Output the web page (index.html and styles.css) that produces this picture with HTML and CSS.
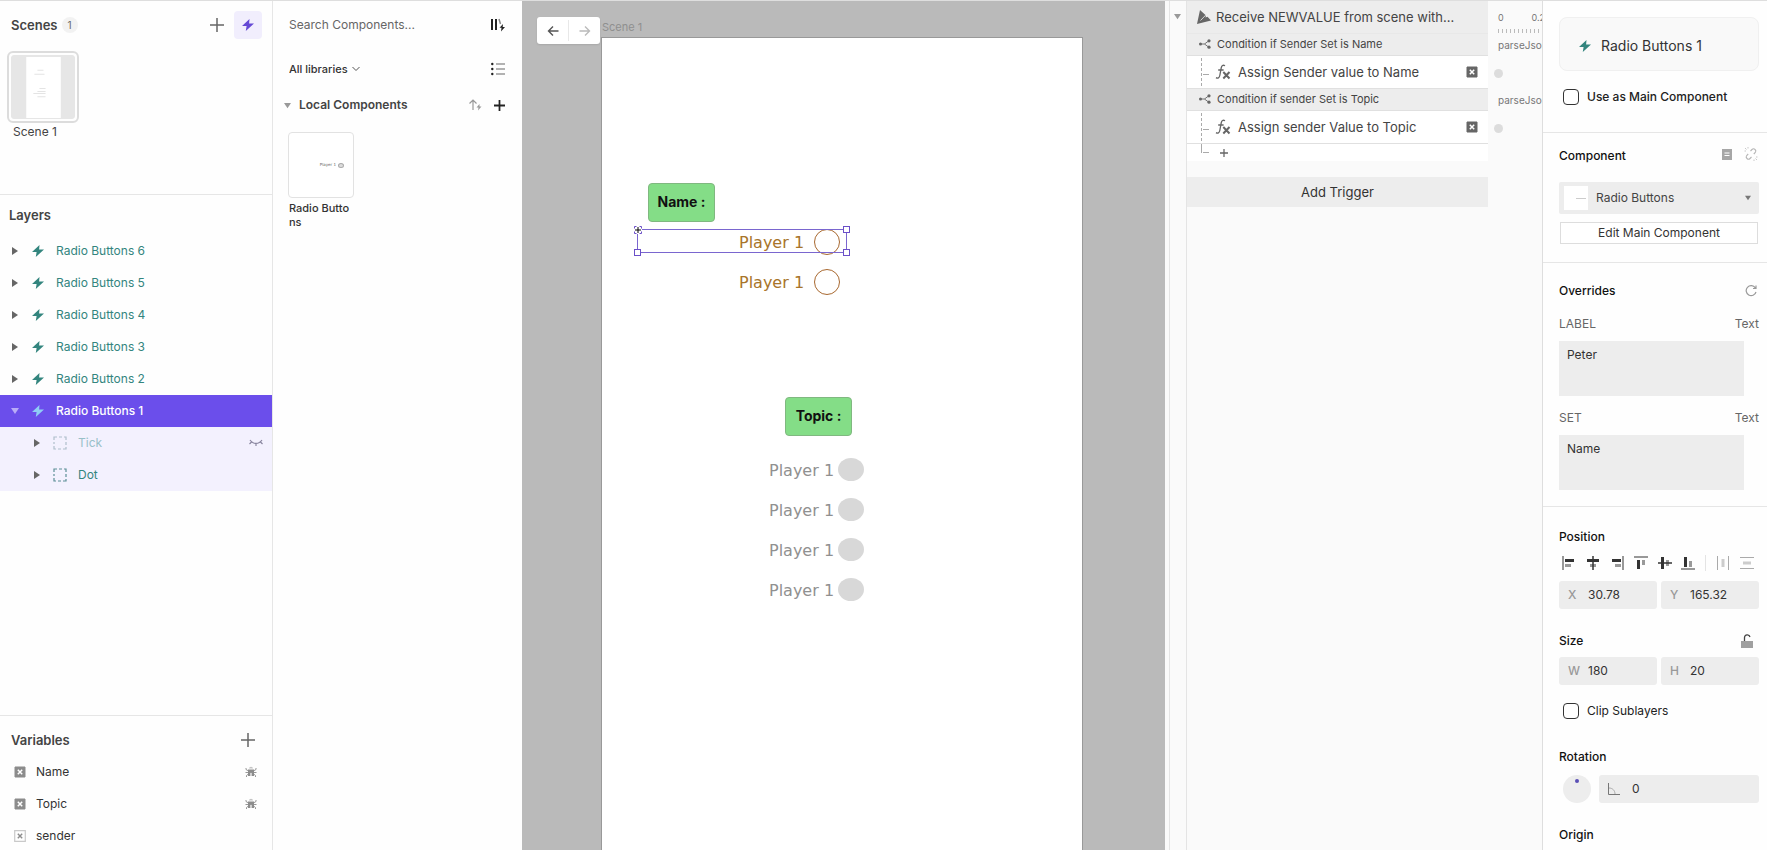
FILE: index.html
```html
<!DOCTYPE html>
<html lang="en">
<head>
    <meta charset="UTF-8">
    <meta name="viewport" content="width=device-width, initial-scale=1.0">
    <title>Scene 1</title>
    <link rel="stylesheet" href="styles.css">
</head>
<body>
    <!-- Shared icons -->
    <svg class="sprite" width="0" height="0" aria-hidden="true">
        <symbol id="bolt" viewBox="0 0 12 12"><path d="M7.5 0 0 7h4.6L3.8 12 12 4.6H7.1z" fill="currentColor"/></symbol>
        <symbol id="plus" viewBox="0 0 14 14"><path d="M7 0v14M0 7h14" fill="none" stroke="currentColor" stroke-width="1.5"/></symbol>
        <symbol id="plus-bold" viewBox="0 0 10 10"><path d="M5 0v10M0 5h10" fill="none" stroke="currentColor" stroke-width="1.6"/></symbol>
        <symbol id="right" viewBox="0 0 8 8"><path d="M1 0l6 4-6 4z" fill="currentColor"/></symbol>
        <symbol id="down" viewBox="0 0 8 8"><path d="M0 1h8L4 7z" fill="currentColor"/></symbol>
        <symbol id="group" viewBox="0 0 14 14"><path d="M1 4V1h3M6 1h3M11 1h2v3M13 6v3M13 11v2h-3M8 13H5M3 13H1v-3M1 8V6" fill="none" stroke="currentColor" stroke-width="1.2"/></symbol>
        <symbol id="variable" viewBox="0 0 12 12"><path d="M1 1h10v10H1z" fill="currentColor" stroke="currentColor"/><path d="M3.8 3.8l4.4 4.4M8.2 3.8L3.8 8.2" stroke="#fff" stroke-width="1.5"/></symbol>
        <symbol id="variable-open" viewBox="0 0 12 12"><path d="M.7.7h10.6v10.6H.7z" fill="none" stroke="#c9c9c9" stroke-width="1.2"/><path d="M3.8 3.8l4.4 4.4M8.2 3.8L3.8 8.2" stroke="#8c8c8c" stroke-width="1.4"/></symbol>
        <symbol id="bug" viewBox="0 0 12 12"><path d="M4 2.5a2 1.8 0 0 1 4 0z" fill="#c4c4c4"/><path d="M3 3.5h6V10H6.6V6H5.4v4H3z" fill="currentColor"/><path d="M1 2v1.5l2 1.2M11 2v1.5L9 4.7M.5 6.5h11M3 8.3L1.5 9.5V11M9 8.3l1.5 1.2V11" fill="none" stroke="currentColor" stroke-width=".9"/></symbol>
        <symbol id="branch" viewBox="0 0 12 10"><path d="M1.5 5h4L9.5 2M5.5 5l4 3" fill="none" stroke="currentColor" stroke-width=".9"/><circle cx="1.5" cy="5" r="1.5" fill="currentColor"/><circle cx="10" cy="1.8" r="1.6" fill="currentColor"/><circle cx="10" cy="8.2" r="1.6" fill="currentColor"/></symbol>
        <symbol id="fx" viewBox="0 0 16 16"><path d="M10 1.8C8 .5 6.7 1.5 6.2 4L4.8 11.5C4.3 14 2.8 14.7 1 13.6M3.2 6h5.4" fill="none" stroke="currentColor" stroke-width="1.3"/><path d="M8.3 8l6.2 6.5M14.5 8l-6.2 6.5" stroke="currentColor" stroke-width="2"/></symbol>
    </svg>

    <div class="app">
        <aside class="sidebar">
            <section class="scenes">
                <header class="scenes-header">
                    <h2>Scenes</h2>
                    <span class="badge">1</span>
                    <button class="icon-btn push" aria-label="Add scene"><svg class="icon-plus"><use href="#plus"/></svg></button>
                    <button class="icon-btn active" aria-label="Components"><svg class="icon-bolt"><use href="#bolt"/></svg></button>
                </header>
                <button class="scene">
                    <svg class="scene-thumb" viewBox="0 0 63 63">
                        <rect width="63" height="63" rx="3" fill="#e6e6e6"/>
                        <rect x="15" y="2" width="34" height="60" fill="#fff"/>
                        <path d="M26 15h6M23 19h10M28 33h6M26 36h8M22 38h12M26 41h8" stroke="#e4e4e4" fill="none"/>
                    </svg>
                    <span class="scene-name">Scene 1</span>
                </button>
            </section>

            <section class="layers">
                <h2>Layers</h2>
                <ul>
                    <li class="layer"><svg class="icon-arrow"><use href="#right"/></svg><svg class="icon-bolt"><use href="#bolt"/></svg><span>Radio Buttons 6</span></li>
                    <li class="layer"><svg class="icon-arrow"><use href="#right"/></svg><svg class="icon-bolt"><use href="#bolt"/></svg><span>Radio Buttons 5</span></li>
                    <li class="layer"><svg class="icon-arrow"><use href="#right"/></svg><svg class="icon-bolt"><use href="#bolt"/></svg><span>Radio Buttons 4</span></li>
                    <li class="layer"><svg class="icon-arrow"><use href="#right"/></svg><svg class="icon-bolt"><use href="#bolt"/></svg><span>Radio Buttons 3</span></li>
                    <li class="layer"><svg class="icon-arrow"><use href="#right"/></svg><svg class="icon-bolt"><use href="#bolt"/></svg><span>Radio Buttons 2</span></li>
                    <li class="layer selected"><svg class="icon-arrow"><use href="#down"/></svg><svg class="icon-bolt"><use href="#bolt"/></svg><span>Radio Buttons 1</span></li>
                    <li class="layer child hidden-layer">
                        <svg class="icon-arrow"><use href="#right"/></svg><svg class="icon-group"><use href="#group"/></svg><span>Tick</span>
                        <svg class="icon-eye push" viewBox="0 0 14 8"><path d="M1 1c3 4.5 9 4.5 12 0M2.5 3L.5 5M7 4.5V7M11.5 3l2 2" fill="none" stroke="currentColor" stroke-width="1.2"/></svg>
                    </li>
                    <li class="layer child"><svg class="icon-arrow"><use href="#right"/></svg><svg class="icon-group"><use href="#group"/></svg><span>Dot</span></li>
                </ul>
            </section>

            <section class="variables">
                <header class="variables-header">
                    <h2>Variables</h2>
                    <button class="icon-btn push" aria-label="Add variable"><svg class="icon-plus"><use href="#plus"/></svg></button>
                </header>
                <ul>
                    <li class="variable"><svg class="icon-var"><use href="#variable"/></svg><span>Name</span><svg class="icon-bug push"><use href="#bug"/></svg></li>
                    <li class="variable"><svg class="icon-var"><use href="#variable"/></svg><span>Topic</span><svg class="icon-bug push"><use href="#bug"/></svg></li>
                    <li class="variable"><svg class="icon-var"><use href="#variable-open"/></svg><span>sender</span></li>
                </ul>
            </section>
        </aside>

        <aside class="library">
            <div class="library-row search-row">
                <input class="search" type="text" aria-label="Search components" placeholder="Search Components...">
                <button class="icon-btn dark" aria-label="Manage libraries"><svg width="14" height="14" viewBox="0 0 14 14"><path d="M1 1v11M5 1v11" stroke="currentColor" stroke-width="2"/><path d="M8 1l1.5 5" stroke="#8a8a8a" stroke-width="1.5"/><path d="M12 6L8.5 9.800h2L10 13.500 14 9h-2.300z" fill="currentColor"/></svg></button>
            </div>
            <div class="library-row filter-row">
                <select class="filter" aria-label="Library"><option>All libraries</option></select>
                <svg class="chevron" viewBox="0 0 8 6"><path d="M.5 1L4 4.500 7.500 1" fill="none" stroke="currentColor"/></svg>
                <button class="icon-btn dark push" aria-label="List view"><svg width="14" height="14" viewBox="0 0 14 14"><path d="M5 2h9M5 7h9M5 12h9" stroke="#999" stroke-width="1.3"/><g fill="currentColor"><circle cx="1.3" cy="2" r="1.2"/><circle cx="1.3" cy="7" r="1.2"/><circle cx="1.3" cy="12" r="1.2"/></g></svg></button>
            </div>
            <div class="library-row local-row">
                <svg class="icon-fold"><use href="#down"/></svg>
                <h2>Local Components</h2>
                <button class="icon-btn faint push" aria-label="Publish"><svg width="13" height="12" viewBox="0 0 13 12"><path d="M4 11V1M.5 4.500L4 1l3.500 3.500" fill="none" stroke="currentColor" stroke-width="1.2"/><path d="M10.500 5L7.500 8.500h2L9 11.500l3.500-4h-2z" fill="currentColor"/></svg></button>
                <button class="icon-btn dark" aria-label="Add component"><svg width="11" height="11"><use href="#plus-bold"/></svg></button>
            </div>
            <figure class="component">
                <div class="component-thumb"><span>Player 1</span><i></i></div>
                <figcaption>Radio Buttons</figcaption>
            </figure>
        </aside>

        <main class="stage">
            <span class="scene-label">Scene 1</span>
            <div class="history">
                <button aria-label="Back"><svg viewBox="0 0 12 12"><path d="M6 1.5L1.5 6 6 10.500M1.500 6h10" fill="none" stroke="currentColor" stroke-width="1.4"/></svg></button>
                <button aria-label="Forward" disabled><svg viewBox="0 0 12 12"><path d="M6 1.5L10.500 6 6 10.500M10.500 6H.5" fill="none" stroke="currentColor" stroke-width="1.4"/></svg></button>
            </div>
            <div class="artboard">
                <div class="tag tag-name">Name :</div>
                <label class="player name-1">Player 1 <input type="radio" name="name"></label>
                <label class="player name-2">Player 1 <input type="radio" name="name"></label>
                <div class="selection">
                    <svg class="origin" viewBox="0 0 8 8"><path d="M4 1v6M1 4h6" stroke="#000"/><path d="M.5 2.500v-2h2M5.500.5h2v2M7.500 5.500v2h-2M2.500 7.500h-2v-2" fill="none" stroke="#6b4fc8"/></svg>
                    <i class="handle top-right"></i>
                    <i class="handle bottom-right"></i>
                    <i class="handle bottom-left"></i>
                </div>
                <div class="tag tag-topic">Topic :</div>
                <div class="topics">
                    <label class="player muted">Player 1 <input type="radio" name="topic"></label>
                    <label class="player muted">Player 1 <input type="radio" name="topic"></label>
                    <label class="player muted">Player 1 <input type="radio" name="topic"></label>
                    <label class="player muted">Player 1 <input type="radio" name="topic"></label>
                </div>
            </div>
        </main>

        <section class="interactions">
            <div class="gutter"><svg class="icon-fold"><use href="#down"/></svg></div>
            <div class="triggers">
                <div class="trigger">
                    <svg width="14" height="14" viewBox="0 0 14 14"><path d="M3 0L0 14l14-3.500-3.500-3.700-2 .8L9 5.500z" fill="currentColor"/><path d="M8.800 5L3.500 10.500" stroke="#ededed" stroke-width=".8"/></svg>
                    <span>Receive NEWVALUE from scene with...</span>
                </div>
                <div class="condition"><svg width="12" height="10"><use href="#branch"/></svg><span>Condition if Sender Set is Name</span></div>
                <div class="response"><svg class="icon-fx"><use href="#fx"/></svg><span>Assign Sender value to Name</span><svg class="icon-target push"><use href="#variable"/></svg></div>
                <div class="condition"><svg width="12" height="10"><use href="#branch"/></svg><span>Condition if sender Set is Topic</span></div>
                <div class="response"><svg class="icon-fx"><use href="#fx"/></svg><span>Assign sender Value to Topic</span><svg class="icon-target push"><use href="#variable"/></svg></div>
                <div class="add-response"><button class="icon-btn" aria-label="Add response"><svg width="8" height="8"><use href="#plus-bold"/></svg></button></div>
                <button class="add-trigger">Add Trigger</button>
            </div>
            <div class="timeline">
                <div class="ruler"><span>0</span><span>0.2</span></div>
                <div class="ticks"></div>
                <div class="track-label">parseJson</div>
                <div class="track"><i></i></div>
                <div class="track-label">parseJson</div>
                <div class="track"><i></i></div>
            </div>
        </section>

        <aside class="inspector">
            <section class="panel panel-layer">
                <div class="card"><svg class="icon-bolt"><use href="#bolt"/></svg><span>Radio Buttons 1</span></div>
                <label class="check strong"><input type="checkbox"> Use as Main Component</label>
            </section>

            <section class="panel panel-component">
                <header class="panel-header component-header">
                    <h3>Component</h3>
                    <svg class="push" width="10" height="11" viewBox="0 0 10 11"><path d="M0 0h10v11H0z" fill="#a6a6a6"/><path d="M2.500 4h5M2.500 6.500h5" stroke="#fff"/></svg>
                    <svg class="unlink" width="14" height="14" viewBox="0 0 14 14"><path d="M6.500 4L8 2.500c2-2 5 1 3.300 3L9.800 7M7.500 10L6 11.500c-2 2-5-1-3.300-3L4.200 7" fill="none" stroke="#b5b5b5" stroke-width="1.1"/><path d="M.5 4h1.500M1 1l1.500 1.500M4 0v1.500M13.500 10H12M13 13l-1.500-1.500M10 14v-1.500" fill="none" stroke="#c8c8c8"/></svg>
                </header>
                <div class="component-select">
                    <select aria-label="Component"><option>Radio Buttons</option></select>
                    <span class="mini-thumb"><i></i></span>
                    <svg class="caret"><use href="#down"/></svg>
                </div>
                <button class="edit-btn">Edit Main Component</button>
            </section>

            <section class="panel panel-overrides">
                <header class="panel-header">
                    <h3>Overrides</h3>
                    <svg class="push reset" width="12" height="12" viewBox="0 0 12 12"><path d="M10.300 2.800A5 5 0 1 0 11 7M11 .5v3H8" fill="none" stroke="#999" stroke-width="1.2"/></svg>
                </header>
                <div class="field-label"><label for="override-label">LABEL</label><span>Text</span></div>
                <textarea id="override-label">Peter</textarea>
                <div class="field-label next"><label for="override-set">SET</label><span>Text</span></div>
                <textarea id="override-set">Name</textarea>
            </section>

            <section class="panel panel-layout">
                <h3>Position</h3>
                <div class="align">
                    <button aria-label="Align left"><svg viewBox="0 0 14 14"><path d="M1 0v14" stroke="#333"/><path d="M3 4.500h9" stroke="#333" stroke-width="3"/><path d="M3 9.500h6" stroke="#999" stroke-width="3"/></svg></button>
                    <button aria-label="Align center"><svg viewBox="0 0 14 14"><path d="M1 4.500h12" stroke="#333" stroke-width="3"/><path d="M4 9.500h6" stroke="#999" stroke-width="3"/><path d="M7 0v14" stroke="#333" stroke-width="1.5"/></svg></button>
                    <button aria-label="Align right"><svg viewBox="0 0 14 14"><path d="M13 0v14" stroke="#333"/><path d="M2 4.500h9" stroke="#333" stroke-width="3"/><path d="M5 9.500h6" stroke="#999" stroke-width="3"/></svg></button>
                    <button aria-label="Align top"><svg viewBox="0 0 14 14"><path d="M0 1h14" stroke="#333"/><path d="M4.500 4v9" stroke="#333" stroke-width="3"/><path d="M9.500 4v5" stroke="#999" stroke-width="3"/></svg></button>
                    <button aria-label="Align middle"><svg viewBox="0 0 14 14"><path d="M4.500 1v12" stroke="#333" stroke-width="3"/><path d="M9.500 4v6" stroke="#999" stroke-width="3"/><path d="M0 7h14" stroke="#333" stroke-width="1.5"/></svg></button>
                    <button aria-label="Align bottom"><svg viewBox="0 0 14 14"><path d="M0 13h14" stroke="#333"/><path d="M4.500 1v10" stroke="#333" stroke-width="3"/><path d="M9.500 5v6" stroke="#999" stroke-width="3"/></svg></button>
                    <i class="align-divider"></i>
                    <button aria-label="Distribute horizontally"><svg viewBox="0 0 14 14"><path d="M1.500 0v14M12.500 0v14" stroke="#aaa"/><path d="M7 3v8" stroke="#ccc" stroke-width="3"/></svg></button>
                    <button aria-label="Distribute vertically"><svg viewBox="0 0 14 14"><path d="M0 1.500h14M0 12.500h14" stroke="#aaa"/><path d="M3 7h8" stroke="#ccc" stroke-width="3"/></svg></button>
                </div>
                <div class="pair">
                    <label class="number">X <input type="text" value="30.78"></label>
                    <label class="number">Y <input type="text" value="165.32"></label>
                </div>

                <header class="panel-header size-header">
                    <h3>Size</h3>
                    <svg class="push lock" width="12" height="14" viewBox="0 0 12 14"><path d="M3.500 7V3.500a2.800 2.800 0 0 1 5.500-.5" fill="none" stroke="#444" stroke-width="1.3"/><path d="M0 7h12v7H0z" fill="#a0a0a0"/></svg>
                </header>
                <div class="pair">
                    <label class="number">W <input type="text" value="180"></label>
                    <label class="number">H <input type="text" value="20"></label>
                </div>
                <label class="check clip"><input type="checkbox"> Clip Sublayers</label>

                <h3 class="rotation-title">Rotation</h3>
                <div class="rotation">
                    <span class="dial"><i></i></span>
                    <label class="number angle">
                        <svg width="12" height="12" viewBox="0 0 12 12"><path d="M.5 0v11.500H12" fill="none" stroke="#777"/><path d="M1 5c3.500 0 6 2.500 6 6" fill="none" stroke="#aaa"/></svg>
                        <input type="text" aria-label="Rotation" value="0">
                    </label>
                </div>
                <h3>Origin</h3>
            </section>
        </aside>
    </div>
</body>
</html>
```
FILE: styles.css
```css
* {
    box-sizing: border-box;
}
body {
    margin: 0;
    font-family: Inter, "Liberation Sans", sans-serif;
    font-size: 12px;
    line-height: 16px;
    color: #333;
    overflow: hidden;
}
h2, h3, ul, figure {
    margin: 0;
    padding: 0;
}
ul {
    list-style: none;
}
h2 {
    font-size: 12px;
    font-weight: 600;
    color: #444;
}
h3 {
    font-size: 12px;
    font-weight: 500;
    color: #111;
}
button, input, select, textarea {
    font: inherit;
    color: inherit;
    border: none;
    background: none;
    padding: 0;
    margin: 0;
    outline: none;
}
select, input {
    appearance: none;
}
svg {
    display: block;
    flex: none;
}
.sprite {
    position: absolute;
}
.push {
    margin-left: auto;
}
.app {
    display: flex;
    height: 100vh;
    border-top: 1px solid #dedede;
    background: #fefefe;
}

/* icons */
.icon-plus { width: 14px; height: 14px; }
.icon-bolt { width: 12px; height: 12px; }
.icon-arrow { width: 8px; height: 8px; color: #666; }
.icon-group { width: 14px; height: 14px; }
.icon-eye { width: 14px; height: 8px; color: #8a86a0; }
.icon-var, .icon-bug { width: 12px; height: 12px; color: #8c8c8c; }
.icon-fx { width: 16px; height: 16px; }
.icon-target { width: 12px; height: 12px; color: #666; }
.icon-fold { width: 7px; height: 7px; color: #999; }
.icon-btn {
    display: flex;
    align-items: center;
    justify-content: center;
    color: #666;
}
.icon-btn.active {
    width: 28px;
    height: 28px;
    border-radius: 4px;
    background: #f1eefd;
    color: #6549d5;
}
.icon-btn.dark { color: #222; }
.icon-btn.faint { color: #999; }

/* left sidebar */
.sidebar {
    display: flex;
    flex-direction: column;
    flex: none;
    width: 273px;
    border-right: 1px solid #e6e6e6;
}
.scenes {
    height: 194px;
    flex: none;
    border-bottom: 1px solid #e6e6e6;
}
.scenes-header {
    display: flex;
    align-items: center;
    gap: 4px;
    padding: 10px 10px 0 11px;
}
.scenes-header h2,
.variables-header h2,
.layers h2 {
    font-size: 13px;
}
.scenes-header .active {
    margin-left: 6px;
}
.badge {
    width: 16px;
    border-radius: 8px;
    background: #f2f2f2;
    font-size: 10px;
    text-align: center;
    color: #666;
}
.scene {
    display: block;
    margin: 12px 0 0 7px;
    text-align: left;
}
.scene-thumb {
    width: 72px;
    height: 72px;
    padding: 2px;
    border: 2px solid #dcdcdc;
    border-radius: 6px;
}
.scene-name {
    display: block;
    margin: 1px 0 0 6px;
    color: #444;
}
.layers {
    flex: 1;
}
.layers h2 {
    padding: 12px 9px;
}
.layer {
    display: flex;
    align-items: center;
    height: 32px;
    padding: 0 9px 0 11px;
    color: #33857e;
}
.layer .icon-bolt {
    margin: 0 12px 0 13px;
}
.layer.selected {
    background: #6b4eeb;
    color: #fff;
    font-weight: 500;
}
.layer.selected .icon-arrow { color: #b9acf7; }
.layer.selected .icon-bolt { color: #8fcdf5; }
.layer.child {
    padding-left: 33px;
    background: #f3f1fe;
}
.layer .icon-group {
    margin: 0 11px 0 12px;
    color: #5d8f96;
}
.layer.hidden-layer span { color: #98c0c8; }
.layer.hidden-layer .icon-group { color: #b0bfcb; }
.variables {
    height: 135px;
    flex: none;
    border-top: 1px solid #e6e6e6;
    overflow: hidden;
}
.variables-header {
    display: flex;
    align-items: center;
    height: 40px;
    padding: 8px 17px 0 11px;
}
.variable {
    display: flex;
    align-items: center;
    height: 32px;
    padding: 0 15px 0 14px;
}
.variable span {
    margin-left: 10px;
}

/* component library */
.library {
    flex: none;
    width: 249px;
    padding: 0 17px 0 16px;
}
.library-row {
    display: flex;
    align-items: center;
}
.search-row { height: 48px; }
.filter-row { height: 40px; }
.local-row {
    height: 32px;
    gap: 8px;
    margin-left: -5px;
}
.local-row .dark { margin-left: 4px; }
.search {
    flex: 1;
    min-width: 0;
}
.search::placeholder {
    color: #666;
    opacity: 1;
}
.filter {
    font-size: 11px;
    font-weight: 500;
}
.chevron {
    width: 8px;
    height: 6px;
    margin-left: 4px;
    color: #555;
}
.component {
    width: 66px;
    margin: 11px 0 0 -1px;
}
.component-thumb {
    display: flex;
    align-items: center;
    justify-content: flex-end;
    gap: 2px;
    height: 66px;
    padding: 0 9px;
    border: 1px solid #e2e2e2;
    border-radius: 4px;
    background: #fff;
    font: 4px/6px "DejaVu Sans", sans-serif;
    color: #666;
}
.component-thumb i {
    width: 6px;
    height: 5px;
    border: 1px solid #aaa;
    border-radius: 50%;
    background: #ddd;
}
.component figcaption {
    padding: 3px 0 0 1px;
    font-size: 11px;
    font-weight: 500;
    line-height: 14px;
    word-break: break-all;
}

/* canvas */
.stage {
    position: relative;
    flex: 1;
    min-width: 0;
    display: flex;
    flex-direction: column;
    padding: 18px 82px 0 79px;
    background: #bababa;
    overflow: hidden;
}
.scene-label {
    height: 18px;
    padding-left: 1px;
    font-size: 11px;
    color: #8f8f8f;
}
.history {
    position: absolute;
    top: 16px;
    left: 15px;
    display: flex;
    height: 27px;
    padding: 3px 0;
    border-radius: 3px;
    background: #fff;
    box-shadow: 0 1px 2px rgba(0, 0, 0, 0.1);
}
.history button {
    width: 31px;
    color: #555;
}
.history button + button {
    width: 32px;
    border-left: 1px solid #e8e8e8;
    color: #bbb;
}
.history svg {
    width: 12px;
    height: 12px;
    margin: 0 auto;
}
.artboard {
    position: relative;
    flex: 1;
    border: 1px solid #999;
    border-bottom: none;
    background: #fff;
}
.tag {
    position: absolute;
    width: 67px;
    height: 39px;
    border: 1px solid #80b880;
    border-radius: 4px;
    background: #84dd87;
    color: #111;
    font-size: 14px;
    font-weight: 700;
    line-height: 36px;
    text-align: center;
}
.tag-name { left: 46px; top: 145px; }
.tag-topic { left: 183px; top: 359px; }
.player {
    display: flex;
    align-items: center;
    gap: 10px;
    height: 26px;
    font: 16px/26px "DejaVu Sans", sans-serif;
    color: #a8742a;
}
.player input {
    width: 26px;
    height: 26px;
    margin-bottom: 2px;
    border: 1px solid #a8682f;
    border-radius: 50%;
}
.name-1, .name-2 {
    position: absolute;
    left: 137px;
}
.name-1 { top: 192px; }
.name-2 { top: 232px; }
.selection {
    position: absolute;
    left: 35px;
    top: 191px;
    width: 210px;
    height: 24px;
    border: 1px solid #7a66cf;
    pointer-events: none;
}
.handle {
    position: absolute;
    width: 7px;
    height: 7px;
    border: 1px solid #6b4fc8;
    background: #fff;
}
.top-right { top: -4px; right: -4px; }
.bottom-right { bottom: -4px; right: -4px; }
.bottom-left { bottom: -4px; left: -4px; }
.selection .origin {
    position: absolute;
    top: -4px;
    left: -4px;
    width: 8px;
    height: 8px;
    background: #fff;
}
.topics {
    position: absolute;
    left: 167px;
    top: 420px;
    display: grid;
    gap: 14px;
}
.player.muted {
    gap: 4px;
    color: #909090;
}
.player.muted input {
    height: 23px;
    margin-bottom: 4px;
    border: none;
    background: #d8d8d8;
}

/* triggers */
.interactions {
    display: flex;
    flex: none;
    width: 377px;
    background: #fafafa;
}
.gutter {
    width: 18px;
    margin-left: 4px;
    padding: 12px 0 0 4px;
    border: solid #e4e4e4;
    border-width: 0 1px;
}
.triggers {
    flex: 1;
    min-width: 0;
    color: #444;
}
.trigger {
    display: flex;
    align-items: center;
    gap: 5px;
    height: 33px;
    padding-left: 10px;
    border-bottom: 1px solid #e8e8e8;
    background: #ededed;
    font-size: 13px;
}
.trigger svg, .condition svg, .icon-fx { color: #666; }
.condition {
    display: flex;
    align-items: center;
    gap: 6px;
    height: 22px;
    padding: 0 0 2px 12px;
    border-bottom: 1px solid #e0e0e0;
    background: #ededed;
    font-size: 11px;
}
.response {
    display: flex;
    align-items: center;
    gap: 7px;
    height: 33px;
    padding: 0 10px 0 28px;
    border-bottom: 1px solid #e0e0e0;
    font-size: 13px;
    background: linear-gradient(#aaa, #aaa) 16px 18px / 6px 1px no-repeat, repeating-linear-gradient(#aaa 0 3px, transparent 3px 5px) 14px 2px / 1px 29px no-repeat, #fff;
}
.add-response {
    display: flex;
    align-items: center;
    height: 17px;
    padding-left: 33px;
    background: linear-gradient(#aaa, #aaa) 16px 8px / 6px 1px no-repeat, linear-gradient(#aaa, #aaa) 14px 0 / 1px 9px no-repeat, #fff;
}
.add-trigger {
    width: 100%;
    height: 30px;
    margin-top: 16px;
    background: #ededed;
    color: #333;
    font-size: 13px;
}
.timeline {
    width: 54px;
    padding: 9px 0 0 10px;
    overflow: hidden;
    font-size: 10px;
    color: #777;
}
.ruler {
    display: flex;
    justify-content: space-between;
    margin-right: -3px;
    font-size: 9px;
}
.ticks {
    height: 4px;
    margin-top: 3px;
    background: repeating-linear-gradient(90deg, #bbb 0 1px, transparent 1px 4px);
}
.track-label {
    height: 22px;
    padding-top: 4px;
}
.track {
    height: 33px;
    padding-top: 14px;
    margin-left: -4px;
}
.track i {
    display: block;
    width: 9px;
    height: 9px;
    border-radius: 50%;
    background: #dcdcdc;
}

/* inspector */
.inspector {
    flex: none;
    width: 225px;
    border-left: 1px solid #dedede;
    overflow: hidden;
}
.panel {
    padding: 0 8px 0 16px;
    border-bottom: 1px solid #e6e6e6;
}
.panel-layer { padding-top: 16px; padding-bottom: 27px; }
.panel-component { padding-top: 15px; padding-bottom: 18px; }
.panel-overrides { padding-top: 20px; padding-bottom: 16px; }
.panel-layout { padding-top: 22px; border-bottom: none; }
.card {
    display: flex;
    align-items: center;
    gap: 10px;
    height: 54px;
    padding: 4px 0 0 19px;
    border: 1px solid #f0f0f0;
    border-radius: 8px;
    background: #f9f9f9;
    font-size: 14px;
}
.card .icon-bolt { color: #33857e; }
.check {
    display: flex;
    align-items: center;
    gap: 8px;
    padding-left: 4px;
    color: #222;
}
.check.strong {
    margin-top: 18px;
    font-weight: 500;
}
.check input {
    width: 16px;
    height: 16px;
    border: 1px solid #333;
    border-radius: 4px;
    background: #fff;
}
.panel-header {
    display: flex;
    align-items: center;
    height: 16px;
}
.component-header svg { margin-bottom: 4px; }
.unlink { margin: 0 1px 0 12px; }
.reset { margin-right: 2px; }
.component-select {
    position: relative;
    margin: 18px 0 8px;
}
.component-select select {
    display: block;
    width: 100%;
    height: 32px;
    padding-left: 37px;
    border-radius: 2px;
    background: #ededed;
    color: #444;
}
.mini-thumb {
    position: absolute;
    top: 4px;
    left: 5px;
    width: 24px;
    height: 24px;
    padding: 12px 0 0 12px;
    background: #fff;
}
.mini-thumb i {
    display: block;
    width: 10px;
    height: 1px;
    background: #ccc;
}
.caret {
    position: absolute;
    top: 13px;
    right: 8px;
    width: 6px;
    height: 6px;
    color: #777;
}
.edit-btn {
    display: block;
    width: calc(100% - 2px);
    height: 22px;
    margin: 0 auto;
    border: 1px solid #ddd;
    background: #fff;
}
.field-label {
    display: flex;
    justify-content: space-between;
    margin: 17px 0 9px;
    color: #666;
}
.field-label.next { margin-top: 14px; }
textarea {
    display: block;
    width: calc(100% - 15px);
    height: 55px;
    padding: 6px 8px;
    background: #ededed;
    resize: none;
}
.align {
    display: flex;
    align-items: center;
    justify-content: space-between;
    height: 16px;
    margin: 10px 5px 10px 3px;
}
.align svg {
    width: 14px;
    height: 14px;
}
.align-divider {
    width: 1px;
    height: 16px;
    background: #e4e4e4;
}
.pair {
    display: grid;
    grid-template-columns: 1fr 1fr;
    gap: 4px;
}
.number {
    display: grid;
    grid-template-columns: 20px 1fr;
    align-items: center;
    height: 28px;
    padding-left: 9px;
    border-radius: 3px;
    background: #ededed;
    color: #999;
    font-weight: 500;
}
.number input {
    min-width: 0;
    width: 100%;
    color: #333;
    font-weight: 400;
}
.size-header {
    margin: 24px 0 8px;
}
.lock { margin-right: 6px; }
.clip { margin-top: 18px; }
.rotation-title { margin-top: 30px; }
.rotation {
    display: flex;
    gap: 8px;
    margin: 10px 0 24px 4px;
}
.dial {
    width: 28px;
    height: 28px;
    padding-top: 4px;
    border-radius: 50%;
    background: #ededed;
}
.dial i {
    display: block;
    width: 4px;
    height: 4px;
    margin: 0 auto;
    border-radius: 50%;
    background: #5a4fb5;
}
.angle {
    flex: 1;
    grid-template-columns: 24px 1fr;
}
```
